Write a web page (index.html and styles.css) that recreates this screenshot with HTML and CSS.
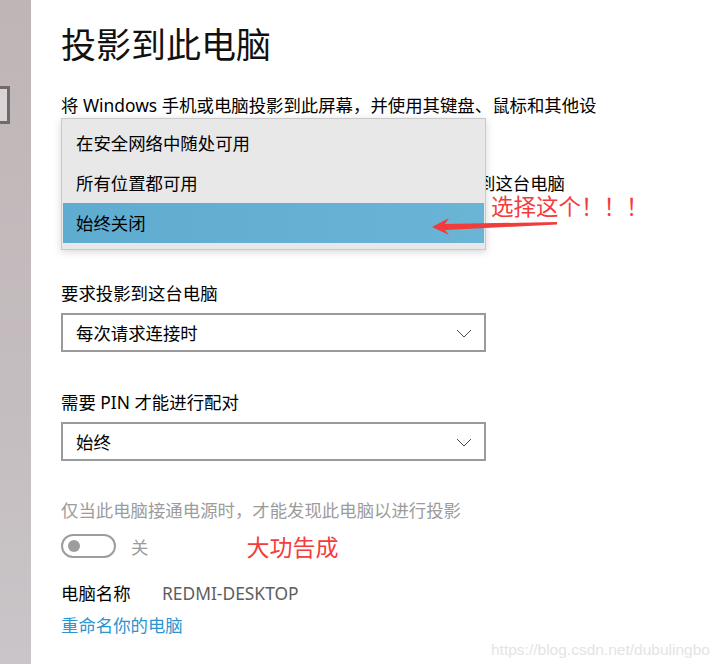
FILE: index.html
```html
<!DOCTYPE html>
<html lang="zh-CN">
<head>
<meta charset="utf-8">
<title>投影到此电脑</title>
<link rel="stylesheet" href="styles.css">
</head>
<body>
<div class="page">
  <aside class="side">
    <div class="side-box"></div>
  </aside>
  <main class="main">
    <h1 class="title">投影到此电脑</h1>
    <p class="desc">将 Windows 手机或电脑投影到此屏幕，并使用其键盘、鼠标和其他设</p>
    <div class="desc-gap"></div>

    <div class="group first">
      <div class="label label-tail">到这台电脑</div>
      <div class="select select-hidden"></div>
    </div>

    <div class="group">
      <div class="label">要求投影到这台电脑</div>
      <div class="select">
        <span>每次请求连接时</span>
        <svg class="chev" width="16" height="9" viewBox="0 0 16 9"><polyline points="1,1 8,8 15,1" fill="none" stroke="#4a4a4a" stroke-width="1"/></svg>
      </div>
    </div>

    <div class="group">
      <div class="label">需要 PIN 才能进行配对</div>
      <div class="select">
        <span>始终</span>
        <svg class="chev" width="16" height="9" viewBox="0 0 16 9"><polyline points="1,1 8,8 15,1" fill="none" stroke="#4a4a4a" stroke-width="1"/></svg>
      </div>
    </div>

    <div class="power-note">仅当此电脑接通电源时，才能发现此电脑以进行投影</div>
    <div class="toggle-row">
      <div class="toggle"><div class="knob"></div></div>
      <span class="toggle-text">关</span>
      <span class="note-done">大功告成</span>
    </div>

    <div class="name-row">
      <span class="name-key">电脑名称</span>
      <span class="name-val">REDMI-DESKTOP</span>
    </div>
    <a class="rename" href="#">重命名你的电脑</a>

    <div class="menu">
      <div class="menu-item">在安全网络中随处可用</div>
      <div class="menu-item">所有位置都可用</div>
      <div class="menu-item selected">始终关闭</div>
    </div>

    <div class="note-pick">选择这个！！！</div>
    <svg class="arrow" width="140" height="24" viewBox="0 0 140 24">
      <polygon points="2,12 19,3 15,9 127,7 127,9.5 15,15 19,20" fill="#f23b3b"/>
    </svg>
  </main>
</div>
<div class="watermark">https://blog.csdn.net/dubulingbo</div>
</body>
</html>
```

FILE: styles.css
```css
* { box-sizing: border-box; }
html, body {
  margin: 0;
  padding: 0;
  width: 725px;
  height: 664px;
  overflow: hidden;
  background: #ffffff;
}
body {
  font-family: "Noto Sans", "Noto Sans CJK SC", sans-serif;
  font-size: 17.4px;
  color: #000;
  position: relative;
}
.page {
  display: flex;
  height: 664px;
}
.side {
  width: 31px;
  flex: none;
  background: linear-gradient(#bfb5b6, #c4bdbf 60%, #c9c5c8);
  padding-top: 86px;
}
.side-box {
  width: 10px;
  height: 38px;
  border: 3px solid #706a6b;
  border-left: none;
  background: #dbd4d6;
}
.main {
  flex: 1;
  position: relative;
  padding-left: 30px;
  padding-top: 21px;
}
.title {
  margin: 0;
  font-size: 35px;
  font-weight: 400;
  line-height: 48px;
  height: 48px;
  color: #111;
}
.desc {
  margin: 23px 0 0;
  line-height: 26px;
  height: 26px;
  white-space: nowrap;
}
.desc-gap { height: 26px; }
.group { margin-top: 37px; }
.group.first { margin-top: 27px; }
.label {
  line-height: 26px;
  height: 26px;
  white-space: nowrap;
}
.label-tail {
  padding-left: 417px;
  font-family: "Liberation Sans", "Noto Sans CJK SC", sans-serif;
}
.select {
  margin-top: 7px;
  width: 425px;
  height: 39px;
  border: 2px solid #9a9a9a;
  display: flex;
  align-items: center;
  justify-content: space-between;
  padding: 0 12px 0 13px;
}
.chev { display: block; margin-top: 1px; }
.power-note {
  margin-top: 36px;
  line-height: 26px;
  height: 26px;
  color: #9c9c9c;
}
.toggle-row {
  margin-top: 11px;
  display: flex;
  align-items: center;
  height: 24px;
}
.toggle {
  width: 55px;
  height: 24px;
  border: 2px solid #9d9d9d;
  border-radius: 12px;
  display: flex;
  align-items: center;
  padding-left: 5px;
}
.knob {
  width: 12px;
  height: 12px;
  border-radius: 50%;
  background: #9d9d9d;
}
.toggle-text {
  margin-left: 15px;
  color: #9c9c9c;
}
.note-done {
  margin-left: 98px;
  font-size: 23px;
  color: #f33c3c;
}
.name-row {
  margin-top: 22px;
  display: flex;
  line-height: 26px;
  height: 26px;
}
.name-key { width: 101px; }
.name-val { color: #5e5e5e; }
.rename {
  display: block;
  margin-top: 6px;
  line-height: 26px;
  color: #2b95d0;
  text-decoration: none;
}
.menu {
  position: absolute;
  left: 30px;
  top: 118px;
  width: 425px;
  height: 132px;
  background: #e8e8e8;
  border: 1px solid #c9c9c9;
  box-shadow: 0 2px 8px rgba(0, 0, 0, 0.16);
  padding: 4px 1px 6px;
}
.menu-item {
  height: 40px;
  line-height: 40px;
  padding-left: 13px;
  color: #000;
}
.menu-item.selected {
  background: linear-gradient(90deg, #5eacd0, #6ab4d6);
}
.note-pick {
  position: absolute;
  left: 460px;
  top: 197px;
  font-family: "Liberation Sans", "Noto Sans CJK SC", sans-serif;
  font-size: 22.5px;
  line-height: 21px;
  color: #f33c3c;
  white-space: nowrap;
}
.arrow {
  position: absolute;
  left: 399px;
  top: 215px;
}
.watermark {
  position: absolute;
  left: 491px;
  top: 640px;
  font-family: "Liberation Sans", Arial, sans-serif;
  font-size: 15.5px;
  line-height: 20px;
  color: #e4e4e4;
  white-space: nowrap;
}
```
